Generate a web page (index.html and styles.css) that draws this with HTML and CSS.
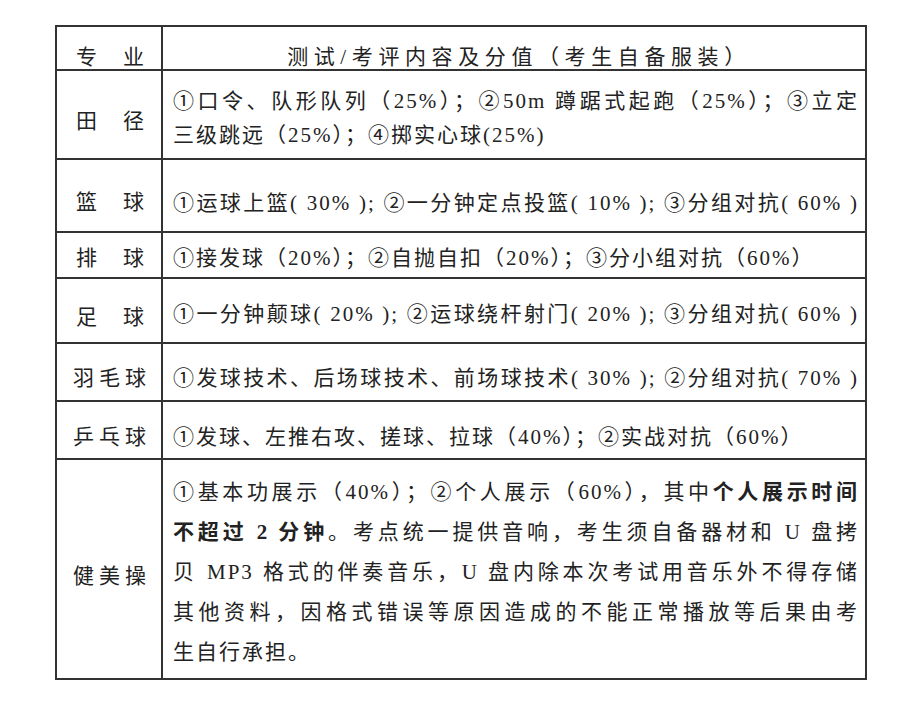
FILE: index.html
```html
<!DOCTYPE html>
<html lang="zh-CN">
<head>
<meta charset="utf-8">
<title>测试/考评内容及分值</title>
<link rel="stylesheet" href="styles.css">
</head>
<body>
<div class="page">
  <div class="grid">
    <div class="cell label pad-head"><span class="two">专业</span></div>
    <div class="cell content center pad-head"><span class="head">测试/考评内容及分值（考生自备服装）</span></div>

    <div class="cell label pad-l"><span class="two">田径</span></div>
    <div class="cell content pad-c1 tj">
      <div class="line j">①口令、队形队列（25%）；②50m 蹲踞式起跑（25%）；③立定</div>
      <div class="line">三级跳远（25%）；④掷实心球(25%)</div>
    </div>

    <div class="cell label pad-l"><span class="two">篮球</span></div>
    <div class="cell content pad-c3">
      <div class="line j">①运球上篮( 30% ); ②一分钟定点投篮( 10% ); ③分组对抗( 60% )</div>
    </div>

    <div class="cell label pad-s"><span class="two">排球</span></div>
    <div class="cell content pad-s">
      <div class="line">①接发球（20%）；②自抛自扣（20%）；③分小组对抗（60%）</div>
    </div>

    <div class="cell label pad-l"><span class="two">足球</span></div>
    <div class="cell content pad-c2">
      <div class="line j">①一分钟颠球( 20% ); ②运球绕杆射门( 20% ); ③分组对抗( 60% )</div>
    </div>

    <div class="cell label pad-m"><span class="three">羽毛球</span></div>
    <div class="cell content pad-m">
      <div class="line j">①发球技术、后场球技术、前场球技术( 30% ); ②分组对抗( 70% )</div>
    </div>

    <div class="cell label pad-l"><span class="three">乒乓球</span></div>
    <div class="cell content pad-l">
      <div class="line">①发球、左推右攻、搓球、拉球（40%）；②实战对抗（60%）</div>
    </div>

    <div class="cell label pad-l"><span class="three">健美操</span></div>
    <div class="cell content pad-c1 jm">
      <div class="line j">①基本功展示（40%）；②个人展示（60%），其中<b>个人展示时间</b></div>
      <div class="line j"><b>不超过 2 分钟</b>。考点统一提供音响，考生须自备器材和 U 盘拷</div>
      <div class="line j">贝 MP3 格式的伴奏音乐，U 盘内除本次考试用音乐外不得存储</div>
      <div class="line j">其他资料，因格式错误等原因造成的不能正常播放等后果由考</div>
      <div class="line">生自行承担。</div>
    </div>
  </div>
</div>
</body>
</html>
```

FILE: styles.css
```css
html, body {
  margin: 0;
  padding: 0;
  background: #ffffff;
}

.page {
  padding: 25px 0 0 55px;
  font-family: "Liberation Serif", "Noto Sans CJK SC", serif;
  font-size: 21px;
  color: #222222;
}

.grid {
  display: grid;
  grid-template-columns: 106px 704px;
  grid-template-rows: 44px 89px 73px 46px 65px 58px 58px 220px;
  width: 810px;
  border-top: 2px solid #333333;
  border-left: 2px solid #333333;
}

.cell {
  box-sizing: border-box;
  border-right: 2px solid #333333;
  border-bottom: 2px solid #333333;
  display: flex;
  flex-direction: column;
  justify-content: center;
  line-height: 30px;
}

.label {
  align-items: center;
}

.two {
  white-space: nowrap;
  letter-spacing: 26px;
  margin-right: -26px;
  margin-left: 2px;
}

.three {
  white-space: nowrap;
  letter-spacing: 5px;
  margin-right: -5px;
  margin-left: 1px;
}

.content {
  padding-left: 10px;
  padding-right: 6px;
  letter-spacing: 2px;
}

.content.center {
  align-items: center;
}

.head {
  white-space: nowrap;
  letter-spacing: 5.6px;
  margin-right: -6px;
}

.line {
  white-space: nowrap;
}

.line.j {
  text-align: justify;
  text-align-last: justify;
  white-space: normal;
}

.tj .line {
  line-height: 34px;
}

.jm .line {
  line-height: 40px;
}

b {
  font-weight: 700;
}

.pad-head { padding-top: 17px; }
.pad-l { padding-top: 13px; }
.pad-m { padding-top: 11px; }
.pad-s { padding-top: 5px; }
.pad-c1 { padding-top: 6px; }
.pad-c2 { padding-top: 7px; }
.pad-c3 { padding-top: 14px; }
```
